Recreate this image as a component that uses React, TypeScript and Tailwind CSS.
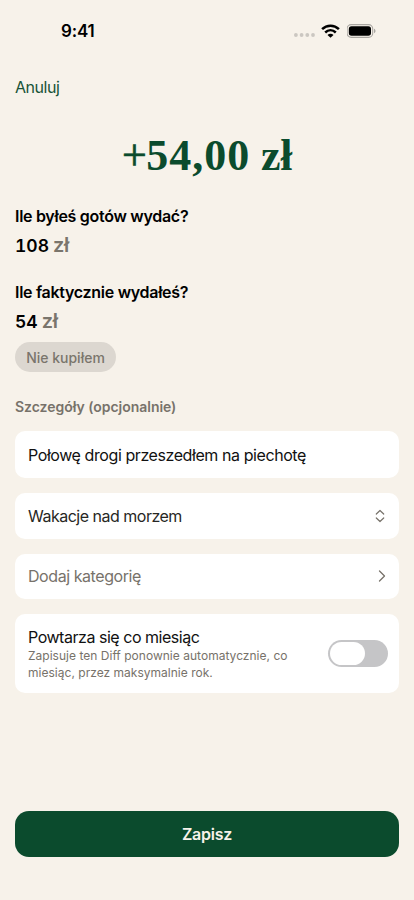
import type { ReactNode } from "react";

function StatusBar() {
  return (
    <header className="flex h-[62px] shrink-0 items-center justify-between pl-[61px] pr-[37px]">
      <span className="text-[17px] font-semibold leading-5 tracking-[-0.2px] text-black">9:41</span>
      <div className="flex items-center">
        <svg className="mr-[5px] mt-[8px]" width="22" height="4" viewBox="0 0 22 4" fill="#cbc7c1">
          <circle cx="1.9" cy="2" r="1.9" />
          <circle cx="7.6" cy="2" r="1.9" />
          <circle cx="13.3" cy="2" r="1.9" />
          <circle cx="19" cy="2" r="1.9" />
        </svg>
        <svg className="mr-[7px]" width="19" height="14" viewBox="0 0 19 14" fill="none" stroke="#000" strokeWidth="2.5">
          <path d="M1.1 5.1C5.8 0.5 13.2 0.5 17.9 5.1" />
          <path d="M4.2 8.5C7.3 5.6 11.7 5.6 14.8 8.5" />
          <path d="M9.5 13.8L6.5 10.9C8.1 9.3 10.9 9.3 12.5 10.9Z" fill="#000" stroke="none" />
        </svg>
        <svg width="30" height="14" viewBox="0 0 30 14" fill="none">
          <rect x="0.1" y="0.6" width="25.6" height="12.8" rx="4.1" stroke="#aaa7a2" strokeWidth="1.1" />
          <rect x="1.8" y="2.2" width="22.2" height="9.6" rx="2.7" fill="#000" />
          <path d="M27 4.8C29 5.5 29 8.5 27 9.2Z" fill="#aaa7a2" />
        </svg>
      </div>
    </header>
  );
}

function Amount({ label, value }: { label: string; value: string }) {
  return (
    <div>
      <div className="h-5 text-[16px] font-semibold leading-5 tracking-[-0.29px] text-black">{label}</div>
      <div className="mt-[9px] flex h-5 items-baseline gap-[4px] leading-5">
        <span className="text-[17.5px] font-semibold tabular-nums text-black">{value}</span>
        <span className="text-[20px] font-semibold tracking-[-0.3px] text-[#7a756c]">zł</span>
      </div>
    </div>
  );
}

function Card({ className, children }: { className: string; children: ReactNode }) {
  return (
    <div className={`flex items-center justify-between rounded-[10px] bg-white pl-[13px] ${className}`}>{children}</div>
  );
}

export default function App() {
  return (
    <div className="flex h-[900px] w-[414px] flex-col overflow-hidden bg-[#f7f2ea] font-['Inter','Liberation_Sans',sans-serif]">
      <StatusBar />
      <main className="flex flex-1 flex-col px-[15px]">
        <button className="mt-[15px] h-5 self-start text-[16px] leading-5 tracking-[-0.45px] text-[#185438]">Anuluj</button>
        <h1 className="mt-[32px] flex h-[54px] items-center justify-center whitespace-pre font-['Liberation_Serif',serif] text-[44px] font-bold leading-[54px] tracking-[0.4px] text-[#0b4b2d]">
          <span className="font-normal tracking-[-0.5px] [-webkit-text-stroke:0.7px_#0b4b2d]">+</span>
          <span className="tracking-[1px]">54,00</span>
          <span className="tracking-[-0.3px]"> zł</span>
        </h1>
        <div className="mt-[23px]">
          <Amount label="Ile byłeś gotów wydać?" value="108" />
        </div>
        <div className="mt-[27px]">
          <Amount label="Ile faktycznie wydałeś?" value="54" />
        </div>
        <button className="mt-[11px] flex h-[30px] w-[101px] items-center justify-center rounded-full bg-[#dcd7d0] text-[14px] font-medium text-[#7a756c]">
          Nie kupiłem
        </button>
        <div className="mt-[25px] h-5 text-[14px] font-semibold leading-5 tracking-[-0.03px] text-[#77726a]">Szczegóły (opcjonalnie)</div>
        <Card className="mt-[14px] h-[47px]">
          <span className="text-[16px] tracking-[-0.42px] text-[#111]">Połowę drogi przeszedłem na piechotę</span>
        </Card>
        <Card className="mt-[14.5px] h-[46px] pr-[14px]">
          <span className="text-[16px] tracking-[-0.5px] text-[#272724]">Wakacje nad morzem</span>
          <svg width="10" height="14" viewBox="0 0 10 14" fill="none" stroke="#77726a" strokeWidth="1.2" strokeLinecap="round" strokeLinejoin="round">
            <path d="M1.3 5L5 1.5L8.7 5M1.3 9L5 12.5L8.7 9" />
          </svg>
        </Card>
        <Card className="mt-[15px] h-[45.5px] pr-[13px]">
          <span className="text-[16px] tracking-[-0.43px] text-[#77726a]">Dodaj kategorię</span>
          <svg width="8" height="12" viewBox="0 0 8 12" fill="none" stroke="#77726a" strokeWidth="1.3" strokeLinecap="round" strokeLinejoin="round">
            <path d="M1.5 1L6.5 6L1.5 11" />
          </svg>
        </Card>
        <Card className="mt-[15px] h-[79px] pr-[11px]">
          <div>
            <div className="text-[16px] leading-5 tracking-[-0.47px] text-[#111]">Powtarza się co miesiąc</div>
            <div className="text-[12px] leading-[17px] tracking-[0.02px] text-[#77726a]">
              Zapisuje ten Diff ponownie automatycznie, co
              <br />
              miesiąc, przez maksymalnie rok.
            </div>
          </div>
          <div className="flex h-[27px] w-[60px] items-center rounded-full bg-[#c5c5c7] pl-[2px]">
            <div className="h-[23px] w-[35px] rounded-full bg-white" />
          </div>
        </Card>
        <button className="mb-[43px] mt-auto h-[46px] rounded-[14px] bg-[#0b4b2d] text-[16px] font-semibold tracking-[-0.25px] text-[#f7f2ea]">
          Zapisz
        </button>
      </main>
    </div>
  );
}
